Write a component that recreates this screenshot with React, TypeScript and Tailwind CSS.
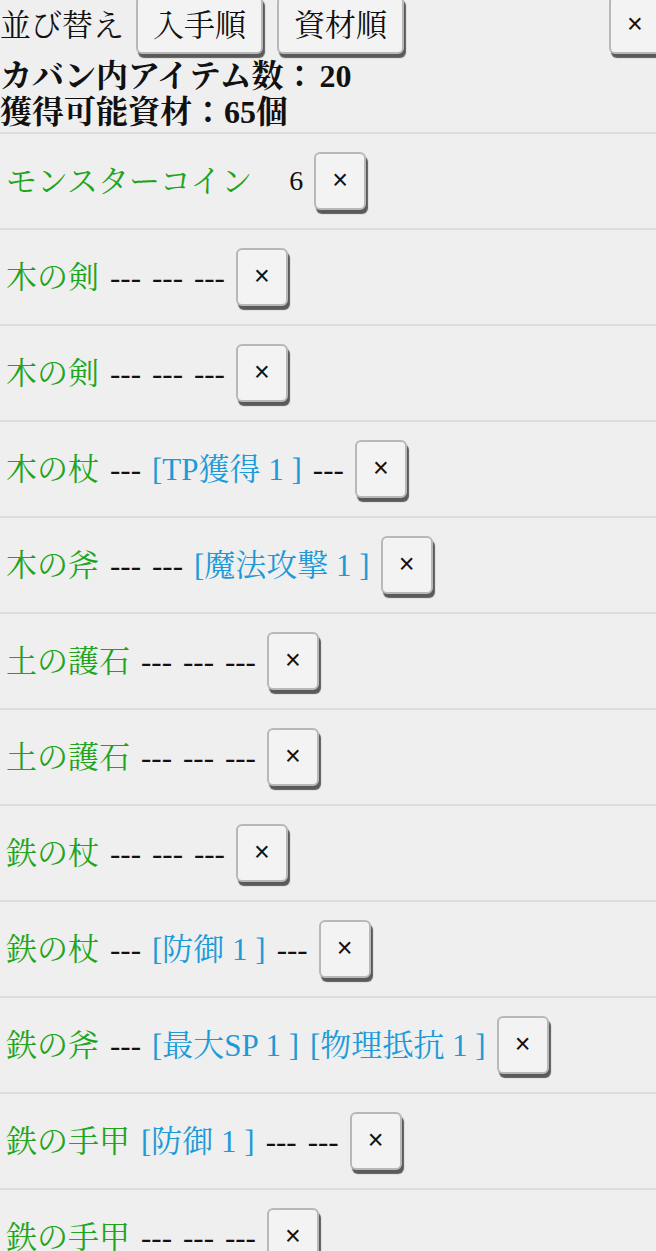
import React from "react";

type Field = { t: string; c: "b" | "k" | "n" };
type Row = { name: string; fields: Field[] };

const D: Field = { t: "---", c: "k" };
const B = (t: string): Field => ({ t, c: "b" });

const rows: Row[] = [
  { name: "モンスターコイン", fields: [{ t: "6", c: "n" }] },
  { name: "木の剣", fields: [D, D, D] },
  { name: "木の剣", fields: [D, D, D] },
  { name: "木の杖", fields: [D, B("[TP獲得 1 ]"), D] },
  { name: "木の斧", fields: [D, D, B("[魔法攻撃 1 ]")] },
  { name: "土の護石", fields: [D, D, D] },
  { name: "土の護石", fields: [D, D, D] },
  { name: "鉄の杖", fields: [D, D, D] },
  { name: "鉄の杖", fields: [D, B("[防御 1 ]"), D] },
  { name: "鉄の斧", fields: [D, B("[最大SP 1 ]"), B("[物理抵抗 1 ]")] },
  { name: "鉄の手甲", fields: [B("[防御 1 ]"), D, D] },
  { name: "鉄の手甲", fields: [D, D, D] },
];

const font = {
  fontFamily: '"Liberation Serif", "Noto Serif CJK JP", "Noto Sans CJK JP", serif',
};

function XButton({ className = "" }: { className?: string }) {
  return (
    <button
      className={
        "flex h-[58px] w-[52px] shrink-0 items-center justify-center rounded-[6px] border-2 border-[#b8b8b8] bg-[#f3f3f3] pb-[2px] text-[27px] leading-none text-[#111] shadow-[2px_4px_1px_#5a5a5a] " +
        className
      }
      style={{ fontFamily: '"Liberation Sans", "DejaVu Sans", sans-serif' }}
    >
      ×
    </button>
  );
}

function TextButton({ label }: { label: string }) {
  return (
    <button className="flex h-[58px] shrink-0 items-center justify-center rounded-[6px] border-2 border-[#b8b8b8] bg-[#f3f3f3] px-[15px] text-[31px] leading-none text-[#111] shadow-[2px_4px_1px_#5a5a5a]">
      {label}
    </button>
  );
}

export default function App() {
  return (
    <div
      className="min-h-[1251px] w-[656px] overflow-hidden bg-[#efefef] text-[#111]"
      style={font}
    >
      <div className="-mt-[4px] flex h-[58px] items-center text-[31px] leading-none">
        <span className="mr-[12px]">並び替え</span>
        <TextButton label="入手順" />
        <div className="w-[14px]" />
        <TextButton label="資材順" />
        <XButton className="-mr-[5px] ml-auto" />
      </div>
      <div className="mt-[4px] text-[32px] font-bold leading-[36px]">
        <div>
          カバン内アイテム数：<span className="ml-[4px]">20</span>
        </div>
        <div>獲得可能資材：65個</div>
      </div>
      <div className="mt-[2px]">
        {rows.map((r, i) => (
          <div
            key={i}
            className="flex h-[96px] items-center border-t-2 border-[#dcdcdc] pl-[6px] text-[31px] leading-none"
          >
            <span className="whitespace-nowrap text-[#1ea51e]">{r.name}</span>
            {r.fields.map((f, j) =>
              f.c === "n" ? (
                <span key={j} className="ml-[37px] text-[28px] text-[#111]">
                  {f.t}
                </span>
              ) : (
                <span
                  key={j}
                  className={
                    "ml-[11px] whitespace-nowrap " +
                    (f.c === "b" ? "text-[#1e9ad8]" : "text-[#111]")
                  }
                >
                  {f.t}
                </span>
              )
            )}
            <XButton className="ml-[11px]" />
          </div>
        ))}
      </div>
    </div>
  );
}
